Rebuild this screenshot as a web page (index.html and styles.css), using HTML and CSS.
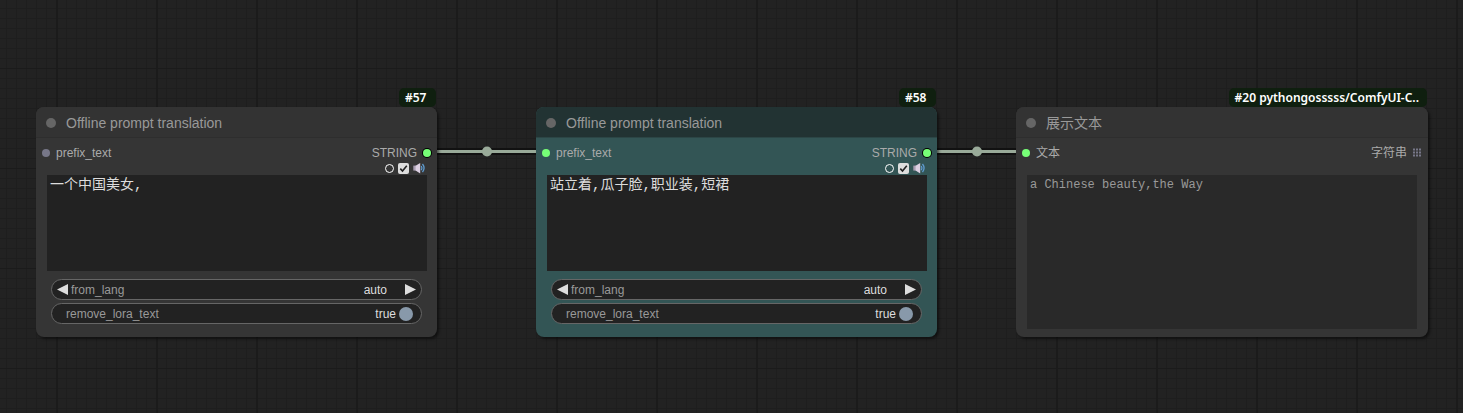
FILE: index.html
```html
<!DOCTYPE html>
<html lang="zh-CN">
<head>
<meta charset="utf-8">
<title>ComfyUI</title>
<link rel="stylesheet" href="styles.css">
</head>
<body>
<svg width="0" height="0" class="sprite" aria-hidden="true">
  <symbol id="tick" viewBox="0 0 11 11"><path d="M2.3 5.6 4.5 8 8.8 2.8" fill="none" stroke="#222" stroke-width="1.6"/></symbol>
  <symbol id="speaker" viewBox="0 0 12 12"><path d="M.3 3.6H3.2V8.6H.3z" fill="#a79bb0"/><path d="M2.6 3.7 7.200 1V11.400L2.600 8.500z" fill="#dccfe2"/><path d="M8.200 4Q9.600 6 8.200 8.200M9.500 2Q12.600 6 9.500 10.200" fill="none" stroke="#5f9cd0" stroke-width="1.3"/></symbol>
  <symbol id="left" viewBox="0 0 11 11"><path d="M0 5.5 11 0V11z" fill="#ddd"/></symbol>
  <symbol id="right" viewBox="0 0 11 11"><path d="M11 5.5 0 0V11z" fill="#ddd"/></symbol>
</svg>
<main class="canvas">
  <svg class="links" aria-hidden="true">
    <g class="link-shade"><path d="M427 151.500H547M927 151.500H1027"/></g>
    <g class="link-line"><path d="M427 151.500H547M927 151.500H1027"/></g>
    <circle cx="487" cy="151.500" r="5" fill="#9a9"/>
    <circle cx="977" cy="151.500" r="5" fill="#9a9"/>
  </svg>

  <article class="node node-57">
    <span class="badge">#57</span>
    <header class="title"><span class="dot"></span><h2>Offline prompt translation</h2></header>
    <div class="slots"><span class="port idle"></span><span>prefix_text</span><span class="output">STRING</span><span class="port linked"></span></div>
    <div class="tools">
      <button class="ring" aria-label="Record"></button>
      <label class="check"><input type="checkbox" checked aria-label="Enable speech"><svg><use href="#tick"/></svg></label>
      <button class="icon" aria-label="Play"><svg><use href="#speaker"/></svg></button>
    </div>
    <textarea class="prompt" aria-label="Prompt" spellcheck="false">一个中国美女,</textarea>
    <div class="widgets">
      <div class="widget">
        <button class="arrow" aria-label="Previous"><svg><use href="#left"/></svg></button>
        <label for="lang57">from_lang</label>
        <select id="lang57"><option>auto</option></select>
        <button class="arrow" aria-label="Next"><svg><use href="#right"/></svg></button>
      </div>
      <label class="widget toggle"><span class="name">remove_lora_text</span><span class="value">true</span><input type="checkbox" checked></label>
    </div>
  </article>

  <article class="node teal node-58">
    <span class="badge">#58</span>
    <header class="title"><span class="dot"></span><h2>Offline prompt translation</h2></header>
    <div class="slots"><span class="port active"></span><span>prefix_text</span><span class="output">STRING</span><span class="port linked"></span></div>
    <div class="tools">
      <button class="ring" aria-label="Record"></button>
      <label class="check"><input type="checkbox" checked aria-label="Enable speech"><svg><use href="#tick"/></svg></label>
      <button class="icon" aria-label="Play"><svg><use href="#speaker"/></svg></button>
    </div>
    <textarea class="prompt" aria-label="Prompt" spellcheck="false">站立着,瓜子脸,职业装,短裙</textarea>
    <div class="widgets">
      <div class="widget">
        <button class="arrow" aria-label="Previous"><svg><use href="#left"/></svg></button>
        <label for="lang58">from_lang</label>
        <select id="lang58"><option>auto</option></select>
        <button class="arrow" aria-label="Next"><svg><use href="#right"/></svg></button>
      </div>
      <label class="widget toggle"><span class="name">remove_lora_text</span><span class="value">true</span><input type="checkbox" checked></label>
    </div>
  </article>

  <article class="node node-20">
    <span class="badge">#20 pythongosssss/ComfyUI-C..</span>
    <header class="title"><span class="dot"></span><h2>展示文本</h2></header>
    <div class="slots"><span class="port active"></span><span>文本</span><span class="output">字符串</span>
      <svg class="list-port" viewBox="0 0 9 9" aria-hidden="true"><path d="M0 1.500H9M0 4.500H9M0 7.500H9" stroke="#778" stroke-width="2" stroke-dasharray="2 1"/></svg>
    </div>
    <textarea class="prompt result" aria-label="Text" readonly spellcheck="false">a Chinese beauty,the Way</textarea>
  </article>
</main>
</body>
</html>
```

FILE: styles.css
```css
* { box-sizing: border-box; }

body {
  margin: 0;
  font: 12px/16px "Liberation Sans", "Noto Sans CJK SC", sans-serif;
  color: #aaa;
}

.sprite { position: absolute; }

button, select, input, textarea { margin: 0; padding: 0; border: 0; font: inherit; color: inherit; }
button { background: none; }

.canvas {
  position: relative;
  min-height: 100vh;
  overflow: hidden;
  background-color: #222;
  background-image:
    linear-gradient(90deg, #1b1b1b 2px, transparent 2px),
    linear-gradient(#1b1b1b 1px, transparent 1px),
    linear-gradient(90deg, #1e1e1e 1px, transparent 1px),
    linear-gradient(#1e1e1e 1px, transparent 1px);
  background-size: 100px 100px, 100px 100px, 10px 10px, 10px 10px;
  background-position: 56px 68px, 56px 68px, 6px 8px, 6px 8px;
}

.links { position: absolute; inset: 0; width: 100%; height: 100%; }
.link-shade { stroke: #111; stroke-width: 7; }
.link-line { stroke: #9a9; stroke-width: 3; }

.node {
  position: absolute;
  top: 107px;
  width: 401px;
  border-radius: 8px;
  background: #353535;
  box-shadow: 2px 2px 3px rgba(0, 0, 0, 0.5);
}
.node-57 { left: 36px; }
.node-58 { left: 536px; }
.node-20 { left: 1016px; width: 412px; }

.badge {
  position: absolute;
  right: 1px;
  bottom: 100%;
  min-width: 37px;
  padding: 0 8px 0 6px;
  border-radius: 5px;
  background: #0f1f0f;
  color: #fff;
  font: 600 12px/19px "Noto Sans", sans-serif;
  white-space: nowrap;
}

.title {
  display: flex;
  align-items: center;
  gap: 10px;
  height: 31px;
  padding: 2px 0 0 10px;
  border-bottom: 1px solid #2e2e2e;
  border-radius: 8px 8px 0 0;
  background: #333;
}
.title h2 { margin: 0; font-size: 14px; font-weight: 400; color: #999; }
.dot { width: 10px; height: 10px; border-radius: 50%; background: #666; }

.teal { background: #355; }
.teal .title { background: #233; border-color: #2c4646; }

.slots { display: flex; align-items: center; gap: 6px; height: 29px; padding: 0 6px; }
.output { margin-left: auto; }
.port { width: 8px; height: 8px; border-radius: 50%; }
.idle { background: #778; }
.active { background: #7f7; }
.linked { background: #7f7; box-shadow: 0 0 0 1px #000; }
.list-port { width: 9px; height: 9px; }

.tools {
  display: flex;
  justify-content: flex-end;
  align-items: center;
  gap: 4px;
  height: 14px;
  margin-top: -6px;
  padding-right: 12px;
}
.ring { width: 9px; height: 9px; border: 1px solid #fff; border-radius: 50%; }
.check { display: grid; width: 11px; height: 11px; }
.check input { grid-area: 1 / 1; appearance: none; width: 11px; height: 11px; border-radius: 2px; background: #ddd; }
.check svg { grid-area: 1 / 1; width: 11px; height: 11px; z-index: 1; pointer-events: none; }
.icon { display: grid; width: 12px; height: 12px; }
.icon svg { width: 12px; height: 12px; }

.prompt {
  display: block;
  width: calc(100% - 21px);
  height: 96px;
  margin-left: 11px;
  padding: 2px 3px;
  resize: none;
  outline: none;
  background: #222;
  color: #ddd;
  font: 14px/16px "Liberation Mono", "Noto Sans CJK SC", monospace;
}
.result {
  width: calc(100% - 22px);
  height: 154px;
  margin: 8px 0 8px 11px;
  background: #292929;
  color: #999;
  font-size: 12px;
}

.widgets { display: grid; gap: 3px; padding: 8px 15px 13px; }
.widget {
  display: flex;
  align-items: center;
  height: 21px;
  padding: 0 5px;
  border: 1px solid #666;
  border-radius: 11px;
  background: #222;
  color: #999;
}
.arrow { display: grid; width: 11px; height: 11px; }
.arrow svg { width: 11px; height: 11px; }
.widget label { margin-left: 3px; }
.widget select { flex: 1; appearance: none; background: none; color: #ddd; text-align-last: right; margin-right: 18px; }
.toggle { padding: 0 8px 0 14px; }
.value { margin-left: auto; margin-right: 3px; color: #ddd; }
.toggle input { appearance: none; width: 14px; height: 14px; border-radius: 50%; background: #89a; }
```
